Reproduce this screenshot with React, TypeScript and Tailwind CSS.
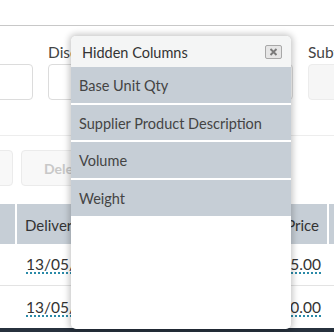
import React from "react";

const font = { fontFamily: "Lato, 'Open Sans', sans-serif" };

export default function App() {
  const items = ["Base Unit Qty", "Supplier Product Description", "Volume", "Weight"];
  return (
    <div className="relative w-[334px] h-[332px] overflow-hidden bg-white text-[#333]" style={font}>
      {/* top */}
      <div className="h-[26px] border-b border-[#c8c8c8]" />
      {/* form row */}
      <div className="flex items-end gap-[15px] ml-[-87px] h-[74px]">
        <div className="flex flex-col">
          <div className="h-[36px] w-[120px] rounded-[4px] border border-[#dcdcdc] bg-white" />
        </div>
        <div className="flex flex-col w-[245px] shrink-0">
          <span className="text-[15.5px] leading-[18px] mb-[3px] text-[#444]">Discount</span>
          <div className="h-[36px] rounded-[4px] border border-[#dcdcdc] bg-white" />
        </div>
        <div className="flex flex-col w-[120px] shrink-0">
          <span className="text-[15.5px] leading-[18px] mb-[3px] text-[#444]">Subtotal</span>
          <div className="h-[36px] rounded-[4px] border border-[#ececec] bg-[#f6f6f6]" />
        </div>
      </div>
      <div className="h-[36px] border-b border-[#ededed]" />
      {/* buttons */}
      <div className="flex gap-[8px] ml-[-87px] mt-[14px]">
        <div className="h-[36px] w-[100px] rounded-[4px] border border-[#ebebeb] bg-[#f8f8f8]" />
        <div className="h-[36px] w-[100px] rounded-[4px] border border-[#ebebeb] bg-[#f8f8f8] flex items-center pl-[22px] text-[14px] font-bold text-[#c8c8c8]">
          Delete
        </div>
      </div>
      {/* table */}
      <div className="mt-[18px]">
        <div className="flex h-[40px] bg-[#c6ced6] text-[15px] text-[#333]">
          <div className="w-[17px] border-r-2 border-white" />
          <div className="flex-1 flex items-center pl-[8px] pt-[2px] border-r-2 border-white">
            <span>Delivery Date</span>
            <span className="ml-auto pr-[8px]">Price</span>
          </div>
          <div className="w-[5px]" />
        </div>
        {["15.00", "50.00"].map((p, i) => (
          <div key={i} className={`flex h-[42px] items-end pb-[11px] text-[15.5px] text-[#333] ${i === 0 ? "border-b border-[#e3e3e3]" : "h-[41px]"}`}>
            <div className="w-[26px]" />
            <span className="border-b-2 border-dotted border-[#2a8aa8] leading-[14px] pb-[1px]">13/05/2024</span>
            <span className="ml-auto mr-[13px] border-b-2 border-dotted border-[#2a8aa8] leading-[14px] pb-[1px]">£{p}</span>
          </div>
        ))}
        <div className="h-[4px] bg-[#27313d]" />
      </div>

      {/* popup */}
      <div className="absolute left-[71px] top-[36px] w-[220px] h-[293px] rounded-[5px] bg-white shadow-[0_0_6px_2px_rgba(0,0,0,0.22)] overflow-hidden">
        <div className="h-[31px] bg-[#f4f5f5] flex items-center pl-[11px] pr-[9px] pt-[2px]">
          <span className="text-[14.5px] text-[#333]">Hidden Columns</span>
          <span className="ml-auto mt-[-1px] w-[17px] h-[14px] rounded-[2px] border border-[#a8a8a8] bg-[#e6e6e6] flex items-center justify-center">
            <svg width="9" height="8" viewBox="0 0 9 8">
              <path d="M1.5 1 L7.5 7 M7.5 1 L1.5 7" stroke="#7a7a7a" strokeWidth="1.9" />
            </svg>
          </span>
        </div>
        {items.map((t, i) => (
          <div
            key={t}
            className={`bg-[#c6ced6] flex items-center pl-[8px] pt-[3px] text-[14.5px] text-[#444] ${i < items.length - 1 ? "h-[37.5px] border-b-2 border-white" : "h-[36px]"}`}
          >
            {t}
          </div>
        ))}
      </div>
    </div>
  );
}
